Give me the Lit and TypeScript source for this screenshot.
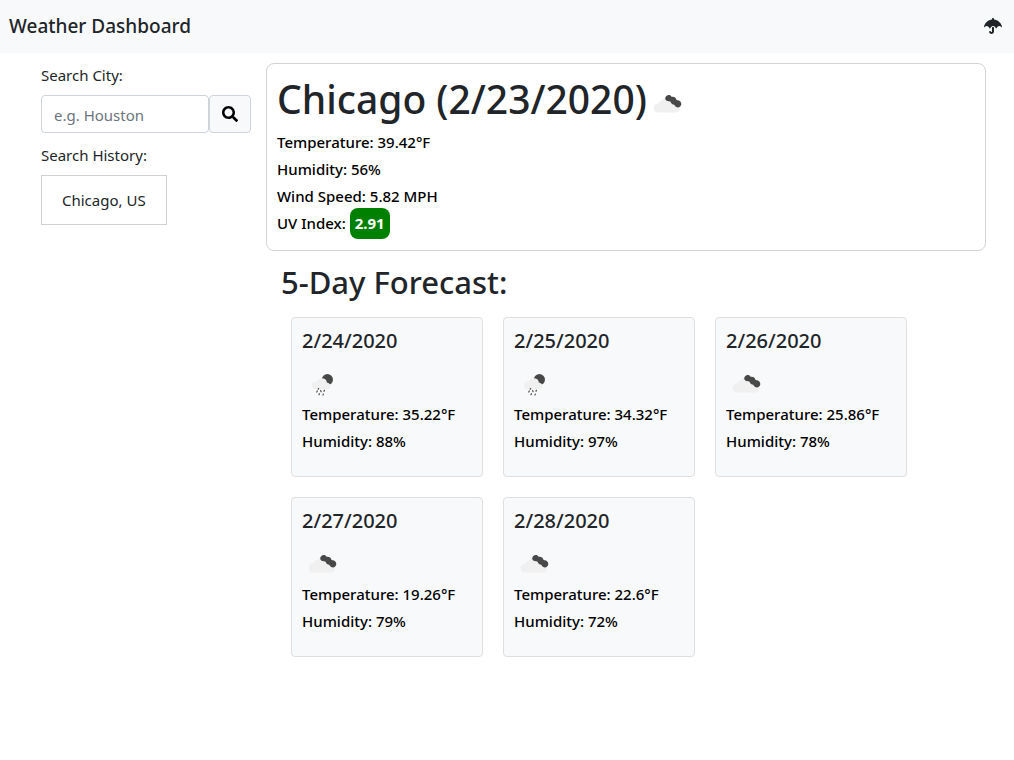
import { LitElement, html, css, svg } from "lit";
import { customElement, property } from "lit/decorators.js";

type Sky = "clouds" | "rain";

interface Day {
  date: string;
  sky: Sky;
  temperature: string;
  humidity: string;
}

const days: Day[] = [
  { date: "2/24/2020", sky: "rain", temperature: "35.22", humidity: "88" },
  { date: "2/25/2020", sky: "rain", temperature: "34.32", humidity: "97" },
  { date: "2/26/2020", sky: "clouds", temperature: "25.86", humidity: "78" },
  { date: "2/27/2020", sky: "clouds", temperature: "19.26", humidity: "79" },
  { date: "2/28/2020", sky: "clouds", temperature: "22.6", humidity: "72" },
];

@customElement("weather-icon")
export class WeatherIcon extends LitElement {
  @property() sky: Sky = "clouds";

  static styles = css`
    :host { display: inline-block; width: 50px; height: 50px; }
    svg { display: block; width: 100%; height: 100%; }
    .dark { fill: #484848; }
    .light { fill: #f0f0f0; }
    .drop { stroke: #555; stroke-width: 1.3; stroke-linecap: round; }
  `;

  render() {
    const clouds = svg`
      <path class="light" d="M10.6 33.6a4.6 4.6 0 0 1 0-9.1h.9a5 5 0 0 1 4-3.4 7 7 0 0 1 12.6 2.6c3.6-.1 5.2 2.3 5.2 5 0 2.9-2 4.9-5 4.9z"/>
      <path class="dark" d="M18.2 19.3c.2-2.5 2.8-3.9 4.9-3 .8.4 1.3.9 1.7 1.6 2.3-.4 4 .7 4.5 2.5.3.5.6.8 1.2.9 2.2 0 4 1.8 3.8 4-.2 2.6-3 3.8-5 2.8-1.2-.6-1.5-1.5-2.1-2.3-1.7 0-2.9-.9-3.4-2.5-.3-.7-.8-1-1.6-1-2.1.2-4.1-1.2-4-3z"/>`;
    const rain = svg`
      <circle class="dark" cx="25.4" cy="20.6" r="5.6"/>
      <path class="light" d="M13.9 30.4a4 4 0 0 1-.2-8h.8a6 6 0 0 1 8.4-2.4c1.3.9 1.9 2.3 1.9 3.6 2.4.2 3.6 1.7 3.6 3.4 0 2.2-1.6 3.4-4 3.4z"/>
      <path class="drop" d="M16.6 29.5l-.3.6M15.3 32l-.5 1M18.7 31.7l.4 1M22.4 31.4l-.4.8M17.4 34.8l-.4.8M21.3 35.2l-.3.7"/>`;
    return html`<svg viewBox="0 0 50 50" aria-hidden="true">${this.sky === "rain" ? rain : clouds}</svg>`;
  }
}

@customElement("app-root")
export class AppRoot extends LitElement {
  static styles = css`
    :host {
      display: block;
      min-height: 100vh;
      background: #fff;
      color: #212529;
      font: 400 15px/24px "Noto Sans", "Open Sans", sans-serif;
    }
    * { box-sizing: border-box; }
    h1, h2, h3, p, ul { margin: 0; padding: 0; font-weight: 500; }
    .bar {
      display: flex;
      align-items: center;
      justify-content: space-between;
      height: 53px;
      padding: 0 12px 1px 9px;
      background: #f8f9fa;
    }
    .brand { font-size: 19px; line-height: 24px; }
    .umbrella { display: block; width: 18px; height: 16px; }
    .layout {
      display: grid;
      grid-template-columns: 210px minmax(0, 1fr);
      gap: 15px;
      padding: 10px 28px 0 41px;
    }
    .side .label { display: block; margin-bottom: 8px; font-weight: 400; }
    .search { display: flex; margin-bottom: 10px; }
    .field {
      flex: 1;
      min-width: 0;
      height: 38px;
      padding: 4px 12px 2px;
      border: 1px solid #ced4da;
      border-radius: 4px;
      font: inherit;
      color: #495057;
      background: #fff;
    }
    .field::placeholder { color: #6c757d; opacity: 1; }
    .go {
      display: grid;
      place-items: center;
      width: 42px;
      height: 38px;
      padding: 0;
      border: 1px solid #ced4da;
      border-radius: 4px;
      background: #f8f9fa;
      color: #000;
    }
    .glass { width: 16px; height: 16px; }
    .city {
      height: 50px;
      padding: 0 20px;
      border: 1px solid #d0d0d0;
      background: #fff;
      color: #212529;
      font: inherit;
    }
    .today { padding: 10px; border: 1px solid #d3d3d3; border-radius: 8px; }
    .title { display: flex; height: 55px; font-size: 39px; line-height: 50px; }
    .title weather-icon { align-self: flex-end; }
    .stats { color: #000; line-height: 27px; }
    .today .stats { padding-bottom: 3px; }
    .stats p { height: 27px; }
    .uv {
      display: inline-block;
      margin: -2px 0;
      padding: 2px 5px;
      border-radius: 8px;
      background: #008000;
      color: #fff;
      font-weight: 700;
    }
    .heading { padding: 12px 15px 0; font-size: 31px; line-height: 38px; }
    .cards { display: flex; flex-wrap: wrap; gap: 20px; padding: 16px 25px; list-style: none; }
    .card {
      width: 192px;
      height: 160px;
      padding: 10px;
      border: 1px solid #dfdfdf;
      border-radius: 4px;
      background: #f8f9fa;
    }
    .date { font-size: 20px; line-height: 26px; }
    .card weather-icon { display: block; margin-top: 5px; }
    .card .stats { margin-top: -8px; }
  `;

  render() {
    return html`
      <header class="bar">
        <h3 class="brand">Weather Dashboard</h3>
        <svg class="umbrella" viewBox="0 0 576 512" fill="currentColor" aria-hidden="true">
          <path d="M575.7 280.8C547.1 144.5 437.3 62.6 320 49.9V32c0-17.7-14.3-32-32-32s-32 14.3-32 32v17.9C138.3 62.6 29.5 144.5.3 280.8c-2.2 10.1 8.5 21.3 18.7 11.4 52-55 107.7-52.4 158.6 37 5.3 9.5 14.9 8.6 19.7 0 20.2-35.4 44.9-73.2 90.7-73.2 58.5 0 88.2 68.8 90.7 73.2 4.8 8.6 14.4 9.5 19.7 0 51-89.5 107.1-91.4 158.6-37 10.3 10 20.9-1.3 18.7-11.4zM256 301.7V432c0 8.8-7.2 16-16 16-7.8 0-13.2-5.3-15.1-10.7-5.9-16.7-24.1-25.4-40.8-19.5-16.7 5.9-25.4 24.2-19.5 40.8 11.2 31.9 41.6 53.3 75.4 53.3 44.1 0 80-35.9 80-80V301.6c-9.1-7.9-19.8-13.6-32-13.6-12.3.1-22.4 4.8-32 13.7z"/>
        </svg>
      </header>
      <div class="layout">
        <aside class="side">
          <label class="label" for="city">Search City:</label>
          <form class="search" @submit=${(e: Event) => e.preventDefault()}>
            <input class="field" id="city" type="text" placeholder="e.g. Houston" />
            <button class="go" aria-label="Search">
              <svg class="glass" viewBox="0 0 512 512" fill="currentColor" aria-hidden="true">
                <path d="M505 442.7L405.3 343c-4.5-4.5-10.6-7-17-7H372c27.6-35.3 44-79.7 44-128C416 93.1 322.9 0 208 0S0 93.1 0 208s93.1 208 208 208c48.3 0 92.7-16.4 128-44v16.3c0 6.4 2.5 12.5 7 17l99.7 99.7c9.4 9.4 24.6 9.4 33.9 0l28.3-28.3c9.4-9.4 9.4-24.6.1-34zM208 336c-70.7 0-128-57.2-128-128 0-70.7 57.2-128 128-128 70.7 0 128 57.2 128 128 0 70.7-57.2 128-128 128z"/>
              </svg>
            </button>
          </form>
          <p class="label">Search History:</p>
          <button class="city">Chicago, US</button>
        </aside>
        <main>
          <section class="today">
            <h1 class="title"><span>Chicago (2/23/2020)</span><weather-icon sky="clouds"></weather-icon></h1>
            <div class="stats">
              <p>Temperature: 39.42°F</p>
              <p>Humidity: 56%</p>
              <p>Wind Speed: 5.82 MPH</p>
              <p>UV Index: <span class="uv">2.91</span></p>
            </div>
          </section>
          <h2 class="heading">5-Day Forecast:</h2>
          <ul class="cards">
            ${days.map((day) => html`
              <li class="card">
                <h3 class="date">${day.date}</h3>
                <weather-icon .sky=${day.sky}></weather-icon>
                <div class="stats">
                  <p>Temperature: ${day.temperature}°F</p>
                  <p>Humidity: ${day.humidity}%</p>
                </div>
              </li>`)}
          </ul>
        </main>
      </div>
    `;
  }
}
